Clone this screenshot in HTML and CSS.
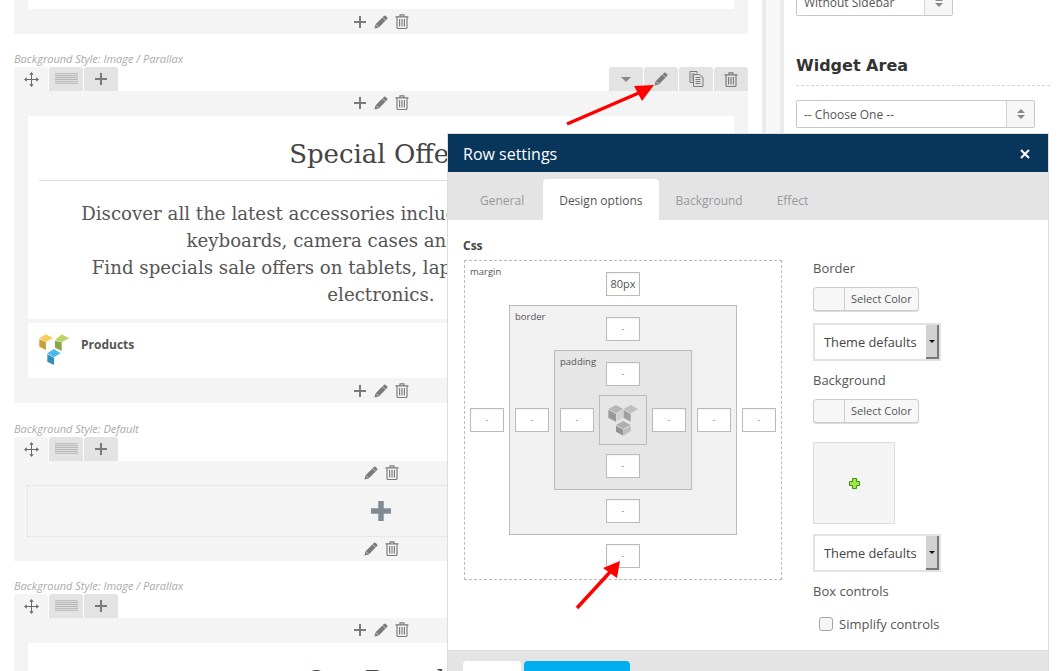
FILE: index.html
```html
<!DOCTYPE html>
<html lang="en">
<head>
<meta charset="utf-8">
<title>Row settings</title>
<link rel="stylesheet" href="styles.css">
</head>
<body>
<svg class="defs" width="0" height="0" aria-hidden="true">
  <symbol id="i-plus" viewBox="0 0 14 14"><path d="M7 1v12M1 7h12" fill="none" stroke="currentColor" stroke-width="2"/></symbol>
  <symbol id="i-plus-bold" viewBox="0 0 20 20"><path d="M10 0v20M0 10h20" fill="none" stroke="currentColor" stroke-width="5.500"/></symbol>
  <symbol id="i-pencil" viewBox="0 0 15 15"><path d="M.5 14.500l1.200-4.600L10.600 1q1-1 2 0l1.400 1.400q1 1 0 2l-8.900 8.900z" fill="currentColor"/><path d="M9.200 2.600l3.200 3.200M1.900 10l3.100 3.100" stroke="#f4f4f4" stroke-width=".7" fill="none"/></symbol>
  <symbol id="i-trash" viewBox="0 0 14 15"><path d="M.5 2.900h13M5 2.700V.8h4v1.900M2 3v10.200q0 1.300 1.300 1.300h7.400q1.300 0 1.300-1.300V3M4.600 5v7.600M7 5v7.600M9.400 5v7.600" fill="none" stroke="currentColor" stroke-width="1.150"/></symbol>
  <symbol id="i-move" viewBox="0 0 15 15"><path d="M7.500 2v11M2 7.500h11" stroke="currentColor" stroke-width="1" fill="none"/><path d="M7.500 0l2.200 2.800H5.300zM7.500 15l2.200-2.800H5.300zM0 7.500l2.800-2.200v4.400zM15 7.500l-2.800-2.200v4.400z" fill="currentColor"/></symbol>
  <symbol id="i-lines" viewBox="0 0 24 12"><path d="M0 .5h24M0 2.500h24M0 4.500h24M0 6.500h24M0 8.500h24M0 10.500h24" stroke="currentColor" stroke-width="1" fill="none"/></symbol>
  <symbol id="i-copy" viewBox="0 0 14 16"><path d="M.5.5h7v2M.5.5v11h3M4 3.500h6l3.500 3v9H4z" fill="none" stroke="currentColor" stroke-width="1"/><path d="M6 6.500h5M6 8.500h5M6 10.500h5M6 12.500h5M2 3h3M2 5h1.500M2 7h1.500M2 9h1.500" stroke="currentColor" stroke-width="1" fill="none"/></symbol>
</svg>

<div class="page">
  <main class="builder">
    <section class="row row-cut">
      <div class="row-body">
        <div class="block block-cut"></div>
        <div class="controls"><svg class="ic"><use href="#i-plus"/></svg><svg class="ic"><use href="#i-pencil"/></svg><svg class="ic ic-trash"><use href="#i-trash"/></svg></div>
      </div>
    </section>

    <section class="row">
      <p class="row-label">Background Style: Image / Parallax</p>
      <div class="tabs">
        <div class="tab tab-move"><svg class="ic ic-move"><use href="#i-move"/></svg></div>
        <div class="tab"><svg class="ic-lines"><use href="#i-lines"/></svg></div>
        <div class="tab"><svg class="ic"><use href="#i-plus"/></svg></div>
        <div class="tabs-right">
          <div class="tab"><span class="caret"></span></div>
          <div class="tab"><svg class="ic"><use href="#i-pencil"/></svg></div>
          <div class="tab"><svg class="ic ic-copy"><use href="#i-copy"/></svg></div>
          <div class="tab"><svg class="ic ic-trash"><use href="#i-trash"/></svg></div>
        </div>
      </div>
      <div class="row-body">
        <div class="controls controls-top"><svg class="ic"><use href="#i-plus"/></svg><svg class="ic"><use href="#i-pencil"/></svg><svg class="ic ic-trash"><use href="#i-trash"/></svg></div>
        <div class="block block-text">
          <h2 class="title">Special Offers</h2>
          <p class="copy">Discover all the latest accessories including mouse, headphones,<br>keyboards, camera cases and phone bags,<br>Find specials sale offers on tablets, laptops and mobile phones<br>electronics.</p>
        </div>
        <div class="block block-product">
          <svg class="logo" viewBox="0 0 32 33" aria-hidden="true">
            <path d="M.3 4.300L6.800.3 14 4l-7 4z" fill="#fcc95e"/><path d="M.3 5L7 8.300V16L.3 12.700z" fill="#c7a03f"/>
            <path d="M16 6l6.700-5.700L30.300 4.300 22.700 8z" fill="#b9d664"/><path d="M16 6.700L22.700 8.300V17L16 13.700z" fill="#8aa646"/>
            <path d="M8.300 19.300L15 15l6.700 4.300L15 23.300z" fill="#4bb9ea"/><path d="M8.300 20L15 23.700V31L8.300 27.700z" fill="#2f8fba"/>
          </svg>
          <span class="product-name">Products</span>
        </div>
        <div class="controls"><svg class="ic"><use href="#i-plus"/></svg><svg class="ic"><use href="#i-pencil"/></svg><svg class="ic ic-trash"><use href="#i-trash"/></svg></div>
      </div>
    </section>

    <section class="row row-tight">
      <p class="row-label">Background Style: Default</p>
      <div class="tabs">
        <div class="tab tab-move"><svg class="ic ic-move"><use href="#i-move"/></svg></div>
        <div class="tab"><svg class="ic-lines"><use href="#i-lines"/></svg></div>
        <div class="tab"><svg class="ic"><use href="#i-plus"/></svg></div>
      </div>
      <div class="row-body">
        <div class="controls controls-two"><svg class="ic"><use href="#i-pencil"/></svg><svg class="ic ic-trash"><use href="#i-trash"/></svg></div>
        <div class="block-empty"><svg class="ic-big"><use href="#i-plus-bold"/></svg></div>
        <div class="controls controls-two"><svg class="ic"><use href="#i-pencil"/></svg><svg class="ic ic-trash"><use href="#i-trash"/></svg></div>
      </div>
    </section>

    <section class="row">
      <p class="row-label">Background Style: Image / Parallax</p>
      <div class="tabs">
        <div class="tab tab-move"><svg class="ic ic-move"><use href="#i-move"/></svg></div>
        <div class="tab"><svg class="ic-lines"><use href="#i-lines"/></svg></div>
        <div class="tab"><svg class="ic"><use href="#i-plus"/></svg></div>
      </div>
      <div class="row-body">
        <div class="controls controls-top"><svg class="ic"><use href="#i-plus"/></svg><svg class="ic"><use href="#i-pencil"/></svg><svg class="ic ic-trash"><use href="#i-trash"/></svg></div>
        <div class="block block-text block-last">
          <h2 class="title">Our Brands</h2>
        </div>
      </div>
    </section>
  </main>

  <div class="gutter"></div>

  <aside class="sidebar">
    <div class="side-select side-select-cut"><span class="side-select-text">Without Sidebar</span><span class="side-select-btn"><span class="updown"></span></span></div>
    <h3 class="side-title">Widget Area</h3>
    <div class="side-select side-select-wide"><span class="side-select-text">-- Choose One --</span><span class="side-select-btn"><span class="updown"></span></span></div>
  </aside>
</div>

<div class="modal">
  <header class="modal-head">
    <span class="modal-title">Row settings</span>
    <svg class="modal-close" viewBox="0 0 10 10" aria-label="Close"><path d="M1 1l8 8M9 1l-8 8" stroke="#fff" stroke-width="2" fill="none"/></svg>
  </header>
  <nav class="modal-tabs">
    <span class="mtab">General</span>
    <span class="mtab mtab-active">Design options</span>
    <span class="mtab">Background</span>
    <span class="mtab">Effect</span>
  </nav>
  <div class="modal-body">
    <div class="css-col">
      <div class="css-head">Css</div>
      <div class="box box-margin">
        <span class="box-label">margin</span>
        <span class="fld fld-t fld-val">80px</span>
        <span class="fld fld-l">-</span>
        <div class="box box-border">
          <span class="box-label">border</span>
          <span class="fld fld-t">-</span>
          <span class="fld fld-l">-</span>
          <div class="box box-padding">
            <span class="box-label">padding</span>
            <span class="fld fld-t">-</span>
            <span class="fld fld-l">-</span>
            <div class="box-core">
              <svg class="logo-grey" viewBox="0 0 31 31" aria-hidden="true">
                <path d="M.3 4L8 0l7.300 4L8 8.300z" fill="#b6b6b6"/><path d="M.3 4.700L8 9v7.700L.3 12.700z" fill="#999"/><path d="M8.300 9l7-4.300V13l-7 3.700z" fill="#d2d2d2"/>
                <path d="M15.600 4L22.700 0l7.600 4-7.600 4.300z" fill="#bfbfbf"/><path d="M15.600 4.700L22.700 9v7.700L15.600 13z" fill="#a0a0a0"/>
                <path d="M8 20l7.300-4 7.400 4-7.400 4z" fill="#b0b0b0"/><path d="M8 20.700l7.300 4v6L8 26.700z" fill="#939393"/><path d="M15.600 24.700l7.100-4V26l-7.100 4.700z" fill="#bdbdbd"/>
              </svg>
            </div>
            <span class="fld fld-r">-</span>
            <span class="fld fld-b">-</span>
          </div>
          <span class="fld fld-r">-</span>
          <span class="fld fld-b">-</span>
        </div>
        <span class="fld fld-r">-</span>
        <span class="fld fld-b">-</span>
      </div>
    </div>
    <div class="opts-col">
      <div class="opt-label opt-first">Border</div>
      <div class="color-btn"><span class="swatch"></span><span class="color-text">Select Color</span></div>
      <div class="theme-select"><span class="theme-text">Theme defaults</span><span class="theme-arrow"></span></div>
      <div class="opt-label opt-bg">Background</div>
      <div class="color-btn"><span class="swatch"></span><span class="color-text">Select Color</span></div>
      <div class="image-box"><svg class="green-plus" viewBox="0 0 11 11" aria-hidden="true"><path d="M3.500.5h4v3h3v4h-3v3h-4v-3h-3v-4h3z" fill="#a6e34b" stroke="#2f9a00" stroke-width="1"/></svg></div>
      <div class="theme-select"><span class="theme-text">Theme defaults</span><span class="theme-arrow"></span></div>
      <div class="opt-label opt-box">Box controls</div>
      <label class="check"><input type="checkbox" class="check-input"><span>Simplify controls</span></label>
    </div>
  </div>
  <footer class="modal-foot">
    <span class="foot-btn"></span>
    <span class="foot-btn foot-btn-blue"></span>
  </footer>
</div>

<svg class="arrows" width="1062" height="671" viewBox="0 0 1062 671" aria-hidden="true">
  <path d="M567 124L641 92" stroke="#f00" stroke-width="3.500" fill="none"/>
  <path d="M654 85L634 86L642 101z" fill="#f00"/>
  <path d="M577 608L611 571" stroke="#f00" stroke-width="3.500" fill="none"/>
  <path d="M620 561L603 568L617 578z" fill="#f00"/>
</svg>
</body>
</html>
```
FILE: styles.css
```css
* { box-sizing: border-box; }
html, body { margin: 0; padding: 0; height: 671px; overflow: hidden; background: #fff; }
body { position: relative; font-family: "Open Sans", "Liberation Sans", sans-serif; color: #555; }
.defs { position: absolute; }

.page { display: flex; height: 671px; padding-left: 14px; overflow: hidden; }
.builder { width: 734px; flex: none; }

.row { margin-bottom: 21px; }
.row-tight { margin-bottom: 20px; }
.row-label { margin: 0 0 2px; height: 11px; padding: 0; line-height: 9px; font-size: 11px; font-style: italic; color: #aaa; white-space: nowrap; }
.row-cut { height: 34px; margin-bottom: 20px; }
.row-body { background: #f4f4f4; padding: 0 14px; }

.tabs { display: flex; gap: 1px; height: 24px; }
.tab { width: 34px; height: 24px; background: #e3e3e3; border-radius: 3px 3px 0 0; display: flex; align-items: center; justify-content: center; color: #7d7d7d; }
.tab-move { background: #f4f4f4; }
.tabs-right { display: flex; gap: 1px; margin-left: auto; }
.caret { width: 0; height: 0; border: 5px solid transparent; border-top-color: #888; border-bottom: 0; }

.ic { width: 14px; height: 14px; display: block; color: #7a7a7a; flex: none; }
.ic-trash { height: 15px; }
.ic-move { width: 15px; height: 15px; color: #6a6a6a; }
.ic-copy { height: 16px; width: 15px; }
.ic-lines { width: 23px; height: 12px; color: #b4b4b4; display: block; }
.ic-big { width: 20px; height: 20px; color: #808b95; display: block; }

.controls { height: 25px; display: flex; align-items: center; justify-content: center; gap: 7px; }
.controls-top { padding-bottom: 2px; }
.controls-two { height: 24px; padding-bottom: 1px; }

.block { background: #fff; border-radius: 2px; }
.block-cut { height: 9px; border-radius: 0 0 2px 2px; }
.block-text { padding: 20px 11px 11px; height: 203px; margin-bottom: 4px; color: #444; font-family: "DejaVu Serif", "Liberation Serif", serif; text-align: center; }
.block-last { padding-top: 19px; }
.title { margin: 0; padding: 0 0 8px 2px; border-bottom: 1px solid #ddd; font-size: 26px; line-height: 36px; font-weight: 400; color: #444; }
.copy { margin: 19px 0 0; font-size: 18.2px; line-height: 27px; color: #555; white-space: nowrap; }

.block-product { height: 55px; display: flex; align-items: flex-start; padding: 11px 0 0 11px; }
.logo { width: 32px; height: 33px; display: block; flex: none; }
.product-name { margin: 3px 0 0 10px; font-size: 12px; line-height: 16px; font-weight: 700; color: #555; }

.block-empty { height: 52px; margin: 0 -1px; border: 1px dotted #dcdcdc; display: flex; align-items: center; justify-content: center; }

.gutter { width: 22px; margin-left: 14px; flex: none; background: #f7f7f7; border-left: 4px solid #ebebeb; border-right: 4px solid #ececec; }

.sidebar { flex: none; width: 266px; padding-left: 12px; }
.side-select { display: flex; align-items: center; height: 28px; background: #fff; border: 1px solid #c8c8c8; border-radius: 2px; font-size: 12px; color: #555; }
.side-select-cut { width: 157px; margin-top: -12px; }
.side-select-wide { width: 239px; }
.side-select-text { flex: 1; padding-left: 7px; white-space: nowrap; }
.side-select-btn { width: 28px; align-self: stretch; background: #f6f6f6; border-left: 1px solid #d5d5d5; display: flex; align-items: center; justify-content: center; }
.updown { display: flex; flex-direction: column; gap: 2px; }
.updown::before { content: ""; width: 0; height: 0; border: 4px solid transparent; border-bottom-color: #888; border-top: 0; }
.updown::after { content: ""; width: 0; height: 0; border: 4px solid transparent; border-top-color: #888; border-bottom: 0; }
.side-title { margin: 39px 0 14px; width: 254px; height: 31px; padding-bottom: 9px; border-bottom: 1px dashed #d5d5d5; font-family: "DejaVu Sans", sans-serif; font-size: 16px; line-height: 21px; font-weight: 700; color: #333; }

.modal { position: absolute; left: 447px; top: 133px; width: 602px; height: 538px; background: #fff; border: 1px solid #ddd; border-bottom: 0; display: flex; flex-direction: column; }
.modal-head { height: 38px; flex: none; background: #08355a; display: flex; align-items: center; justify-content: space-between; padding: 1px 18px 0 15px; }
.modal-title { color: #fff; font-size: 16px; line-height: 20px; }
.modal-close { width: 10px; height: 10px; }

.modal-tabs { height: 48px; flex: none; background: #e4e4e4; display: flex; align-items: flex-end; padding-left: 16px; }
.mtab { height: 41px; padding: 0 16px; margin-right: 2px; line-height: 44px; font-size: 12px; color: #999; }
.mtab:first-child { margin-right: 3px; }
.mtab-active { background: #fff; color: #555; border-radius: 4px 4px 0 0; margin-right: 1px; }

.modal-body { flex: 1; display: flex; padding: 0 0 0 16px; min-height: 0; }
.css-col { width: 349px; flex: none; }
.css-head { margin: 18px 0 8px -1px; height: 14px; line-height: 16px; font-size: 12px; font-weight: 700; color: #444; }

.box { position: relative; display: grid; grid-template-columns: 34px 1fr 34px; grid-template-rows: 24px 1fr 24px; gap: 9px 5px; padding: 11px 5px; align-items: center; justify-items: center; }
.box-margin { width: 318px; height: 320px; border: 1px dashed #bbb; }
.box-border { width: 228px; height: 230px; border: 1px solid #bbb; background: #f1f1f1; }
.box-padding { width: 138px; height: 140px; border: 1px solid #bbb; background: #e6e6e6; }
.box-core { width: 48px; height: 50px; border: 1px solid #bbb; background: #e6e6e6; display: flex; align-items: center; justify-content: center; }
.logo-grey { width: 31px; height: 31px; display: block; }
.box-label { position: absolute; left: 5px; top: 5px; font-size: 9.5px; line-height: 12px; color: #555; }
.fld { width: 34px; height: 24px; background: #fff; border: 1px solid #bbb; box-shadow: inset 0 1px 2px rgba(0,0,0,.06); font-size: 9px; line-height: 22px; text-align: center; color: #888; }
.fld-val { font-size: 11px; color: #555; }
.fld-t { grid-column: 2; grid-row: 1; }
.fld-l { grid-column: 1; grid-row: 2; }
.fld-r { grid-column: 3; grid-row: 2; }
.fld-b { grid-column: 2; grid-row: 3; }
.box-margin > .box-border, .box-border > .box-padding, .box-padding > .box-core { grid-column: 2; grid-row: 2; }

.opts-col { flex: 1; font-size: 13px; }
.opt-label { line-height: 18px; height: 18px; color: #555; }
.opt-first { margin-top: 39px; margin-bottom: 10px; }
.opt-bg { margin-top: 10px; margin-bottom: 10px; }
.opt-box { margin-top: 10px; }
.color-btn { display: flex; width: 106px; height: 24px; border: 1px solid #ccc; border-radius: 3px; background: #f7f7f7; box-shadow: 0 1px 0 #ddd; font-size: 11px; line-height: 22px; color: #555; }
.swatch { width: 31px; border-right: 1px solid #ccc; flex: none; }
.color-text { padding-left: 6px; white-space: nowrap; }
.theme-select { width: 128px; height: 38px; margin-top: 12px; border: 2px solid #e2e2e2; display: flex; align-items: center; justify-content: space-between; padding-left: 9px; background: #fff; color: #444; font-size: 12.8px; }
.theme-text { white-space: nowrap; }
.theme-arrow { width: 13px; height: 34px; background: #d2d2d2; border-right: 2px solid #777; border-bottom: 2px solid #777; position: relative; }
.theme-arrow::after { content: ""; position: absolute; left: 3px; top: 15px; border: 3px solid transparent; border-top: 3px solid #111; border-bottom: 0; }
.image-box { width: 82px; height: 82px; margin-top: 19px; margin-bottom: -2px; background: #f4f4f4; border: 1px solid #ddd; display: flex; align-items: center; justify-content: center; }
.green-plus { width: 11px; height: 11px; }
.check { display: flex; align-items: center; gap: 6px; margin: 15px 0 0 6px; font-size: 13px; color: #555; line-height: 18px; }
.check-input { appearance: none; margin: 0; width: 14px; height: 14px; background: #f6f6f6; border: 1px solid #a5a5a5; border-radius: 3px; }

.modal-foot { height: 21px; flex: none; background: #e4e4e4; border-top: 1px solid #ddd; display: flex; align-items: flex-start; gap: 3px; padding: 10px 0 0 15px; }
.foot-btn { width: 58px; height: 20px; background: #fff; border-radius: 4px 4px 0 0; }
.foot-btn-blue { width: 106px; background: #00aeef; }

.arrows { position: absolute; left: 0; top: 0; pointer-events: none; }
```
